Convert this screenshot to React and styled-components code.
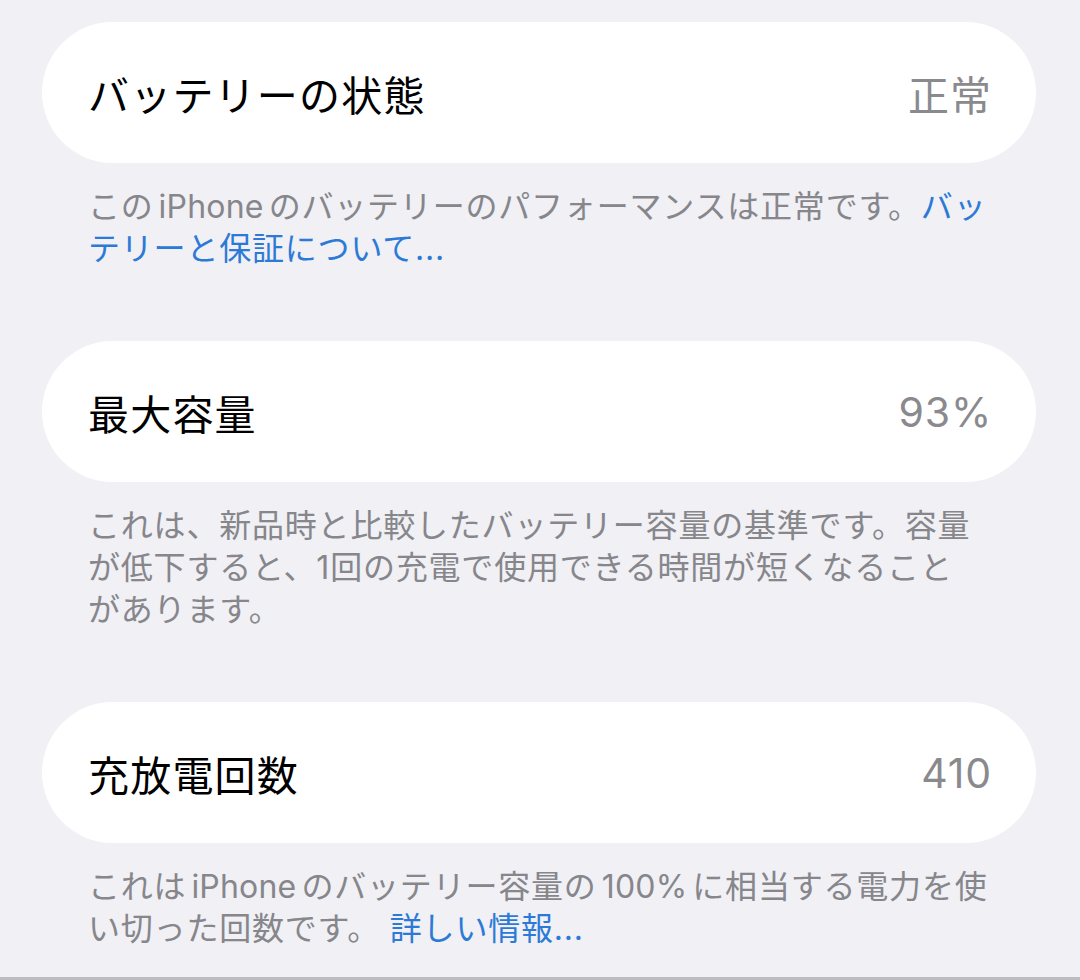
import React from "react";
import styled, { createGlobalStyle } from "styled-components";

const GlobalStyle = createGlobalStyle`
  html, body {
    margin: 0;
    padding: 0;
    background: #f0f0f5;
  }
  body {
    font-family: Inter, "Noto Sans CJK JP", "Noto Sans", sans-serif;
    -webkit-font-smoothing: antialiased;
  }
`;

const Page = styled.div`
  box-sizing: border-box;
  width: 1080px;
  height: 980px;
  padding: 22px 44px 0 42px;
  background: #f0f0f5;
  border-bottom: 3px solid #bdbdc1;
  overflow: hidden;
  display: flex;
  flex-direction: column;
  gap: 71px;
`;

const Section = styled.section`
  display: flex;
  flex-direction: column;
`;

const Card = styled.div`
  box-sizing: border-box;
  height: 141px;
  padding: 0 44px 0 46px;
  background: #ffffff;
  border-radius: 72px;
  display: flex;
  align-items: center;
  justify-content: space-between;
`;

const Title = styled.span`
  font-size: 41px;
  letter-spacing: 1.2px;
  color: #000000;
`;

const Value = styled.span`
  font-size: 41px;
  letter-spacing: ${(p) => (p.$latin ? "0.8px" : "1px")};
  color: #8a8a8e;
`;

const Footer = styled.p`
  margin: 23px 0 0;
  padding: 0 46px;
  font-size: 32px;
  line-height: 42px;
  letter-spacing: 0.8px;
  white-space: nowrap;
  color: #86868b;
`;

const Latin = styled.span`
  margin: 0 5px;
  letter-spacing: 0.2px;
`;

const Link = styled.span`
  color: #2d7ad6;
`;

const App = () => {
  return (
    <>
      <GlobalStyle />
      <Page>
        <Section>
          <Card>
            <Title>バッテリーの状態</Title>
            <Value>正常</Value>
          </Card>
          <Footer>
            この<Latin>iPhone</Latin>のバッテリーのパフォーマンスは正常です。
            <Link>バッ</Link>
            <br />
            <Link>テリーと保証について...</Link>
          </Footer>
        </Section>

        <Section>
          <Card>
            <Title>最大容量</Title>
            <Value $latin>93%</Value>
          </Card>
          <Footer>
            これは、新品時と比較したバッテリー容量の基準です。容量
            <br />
            が低下すると、1回の充電で使用できる時間が短くなること
            <br />
            があります。
          </Footer>
        </Section>

        <Section>
          <Card>
            <Title>充放電回数</Title>
            <Value $latin>410</Value>
          </Card>
          <Footer>
            これは<Latin>iPhone</Latin>のバッテリー容量の<Latin>100%</Latin>に相当する電力を使
            <br />
            い切った回数です。 <Link>詳しい情報...</Link>
          </Footer>
        </Section>
      </Page>
    </>
  );
};

export default App;
